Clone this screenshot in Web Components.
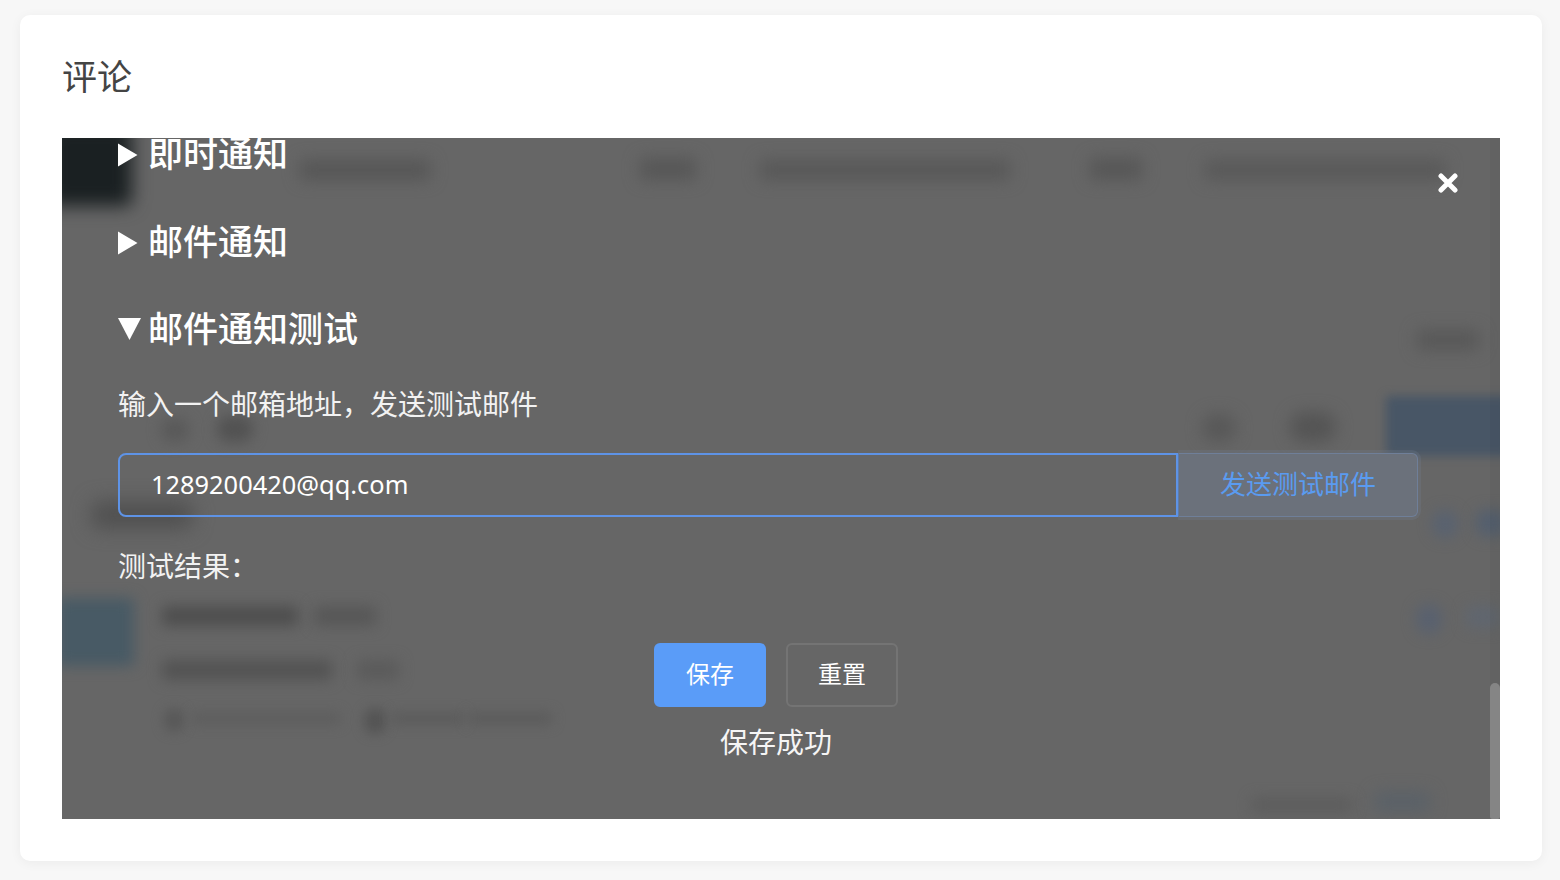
<!DOCTYPE html>
<html lang="zh-CN">
<head>
<meta charset="utf-8">
<title>评论</title>
<style>
html,body{margin:0;padding:0;height:100%;background:#f7f7f7;}
body{font-family:"Noto Sans","Noto Sans CJK SC",sans-serif;}
</style>
</head>
<body>
<comment-page>
  <span slot="title">评论</span>
  <blurred-backdrop slot="backdrop"></blurred-backdrop>
  <test-modal slot="modal">
    <collapse-heading>即时通知</collapse-heading>
    <collapse-heading>邮件通知</collapse-heading>
    <collapse-heading open>邮件通知测试</collapse-heading>
    <mail-test-form></mail-test-form>
  </test-modal>
</comment-page>

<script>
function define(name, css, html, setup){
  customElements.define(name, class extends HTMLElement{
    constructor(){
      super();
      const r=this.attachShadow({mode:'open'});
      r.innerHTML='<style>'+css+'</style>'+html;
    }
    connectedCallback(){ if(setup) setup(this); }
  });
}

define('comment-page',`
  :host{display:block;box-sizing:border-box;height:880px;padding:15px 18px 19px 20px;}
  .card{box-sizing:border-box;height:100%;background:#fff;border-radius:10px;
    box-shadow:0 2px 12px rgba(0,0,0,.05);padding:0 42px 42px;display:flex;flex-direction:column;}
  .title{flex:none;height:123px;box-sizing:border-box;padding-bottom:4px;display:flex;align-items:center;
    font-size:35px;line-height:48px;color:#444;font-family:"Noto Sans CJK SC","Noto Sans",sans-serif;}
  .viewport{flex:1;min-height:0;position:relative;overflow:hidden;background:#666;}
`,`
  <div class="card">
    <div class="title"><slot name="title"></slot></div>
    <div class="viewport">
      <slot name="backdrop"></slot>
      <slot name="modal"></slot>
    </div>
  </div>
`);

/* The page behind the modal: blurred, free-floating shapes under the overlay.
   x, y, w, h, colour, blur, radius */
const BLOBS=[
 [-14,-14,84,82,'#1a2022',9,6],
 [238,22,130,20,'#565656',8,3],[578,20,56,22,'#575757',8,3],[698,22,250,20,'#585858',8,3],
 [1028,20,52,22,'#575757',8,3],[1143,22,240,20,'#595959',8,3],
 [1355,192,62,20,'#585858',8,3],
 [99,280,28,24,'#595959',7,12],[155,278,36,26,'#525252',7,12],
 [1140,276,34,28,'#585858',8,14],[1228,274,46,30,'#555555',8,14],
 [1324,258,124,60,'#485666',5,3],
 [30,364,100,26,'#4f4f4f',10,6],
 [1370,372,26,28,'#596270',7,14],[1414,372,30,26,'#545f6e',7,8],
 [-6,460,78,68,'#485a65',7,3],
 [100,468,136,20,'#4e4e4e',7,3],[252,468,62,20,'#575757',7,3],
 [100,522,170,20,'#535353',7,3],[295,522,42,20,'#5b5b5b',7,3],
 [102,570,20,24,'#585858',6,12],[130,574,148,13,'#5e5e5e',6,3],
 [302,570,22,26,'#545454',6,12],[330,574,72,13,'#5c5c5c',6,3],[406,574,84,13,'#5c5c5c',6,3],
 [1354,466,26,30,'#59616f',7,14],[1404,468,34,22,'#60666f',7,6],
 [1190,660,100,14,'#5c5c5c',7,3],[1312,654,56,20,'#5a6168',8,6]
];
define('blurred-backdrop',`
  :host{display:block;position:absolute;inset:0;overflow:hidden;}
  i{position:absolute;display:block;}
`,``,el=>{
  if(el.shadowRoot.querySelector('i'))return;
  for(const [x,y,w,h,c,b,r] of BLOBS){
    const i=document.createElement('i');
    i.style.cssText=`left:${x}px;top:${y}px;width:${w}px;height:${h}px;background:${c};filter:blur(${b}px);border-radius:${r}px`;
    el.shadowRoot.appendChild(i);
  }
});

define('test-modal',`
  :host{display:flex;position:absolute;inset:0;color:#fff;overflow:hidden;}
  .scroll{flex:1;min-width:0;padding:0 0 0 56px;box-sizing:border-box;margin-top:-11px;}
  .bar{flex:none;width:10px;display:flex;flex-direction:column;justify-content:flex-end;background:rgba(0,0,0,.04);}
  .thumb{height:136px;background:#858585;border-radius:5px 5px 2px 2px;}
  .close{position:absolute;top:35px;right:42px;width:20px;height:20px;}
  svg{display:block;}
`,`
  <div class="scroll"><slot></slot></div>
  <div class="bar"><div class="thumb"></div></div>
  <div class="close"><svg width="20" height="20" viewBox="0 0 20 20"><path d="M3 3L17 17M17 3L3 17" stroke="#fff" stroke-width="5" stroke-linecap="round" fill="none"/></svg></div>
`);

define('collapse-heading',`
  :host{display:flex;align-items:center;height:50px;margin-bottom:37.5px;gap:10px;
    font-size:35px;font-weight:500;line-height:50px;color:#fff;
    font-family:"Noto Sans CJK SC","Noto Sans",sans-serif;}
  :host([open]){gap:7px;}
  svg{flex:none;display:block;margin-top:6px;}
  :host([open]) svg{margin-top:4px;}
  .open{display:none;}
  :host([open]) .open{display:block;}
  :host([open]) .closed{display:none;}
`,`<svg class="closed" width="20" height="24" viewBox="0 0 20 24"><path fill="#fff" d="M0 .5L19.500 12L0 23.500Z"/></svg><svg class="open" width="23" height="24" viewBox="0 0 23 24"><path fill="#fff" d="M0 1H23L11.500 23Z"/></svg><slot></slot>`);

define('mail-test-form',`
  :host{display:block;margin-top:-6.5px;font-family:"Noto Sans CJK SC","Noto Sans",sans-serif;}
  .desc{font-size:28px;line-height:40px;color:#f2f2f2;margin:0 0 30px;height:40px;}
  .row{display:flex;width:1300px;height:64px;margin:0;}
  .input{box-sizing:border-box;width:1060px;height:64px;border:2px solid #5e93e6;
    border-radius:8px 0 0 8px;padding:0 31px 2px;display:flex;align-items:center;font-family:"Noto Sans",sans-serif;
    font-size:25.400px;color:#fff;}
  .send{box-sizing:border-box;width:240px;height:64px;background:#6b717b;border:1px solid #6f7f99;border-left:1px solid #5e7ba8;
    border-radius:0 6px 6px 0;box-shadow:0 0 0 3px rgba(120,135,160,.2);clip-path:inset(-4px -4px -4px 0);
    color:#5a9bf0;font-size:26px;display:flex;align-items:center;justify-content:center;padding-bottom:5px;}
  .result{font-size:28px;line-height:40px;color:#f2f2f2;margin:28px 0 58px;height:40px;}
  .actions{display:flex;justify-content:center;gap:20px;margin-left:-56px;}
  .btn{box-sizing:border-box;width:112px;height:64px;border-radius:6px;display:flex;align-items:center;justify-content:center;
    font-size:24px;color:#fff;padding-bottom:5px;}
  .primary{background:#5a9cf8;}
  .plain{border:2px solid #747474;}
  .msg{margin:14px 0 0 -56px;text-align:center;font-size:28px;line-height:40px;color:#f5f5f5;}
`,`
  <div class="desc">输入一个邮箱地址，发送测试邮件</div>
  <div class="row">
    <div class="input">1289200420@qq.com</div>
    <div class="send">发送测试邮件</div>
  </div>
  <div class="result">测试结果：</div>
  <div class="actions">
    <div class="btn primary">保存</div>
    <div class="btn plain">重置</div>
  </div>
  <div class="msg">保存成功</div>
`);
</script>
</body>
</html>
